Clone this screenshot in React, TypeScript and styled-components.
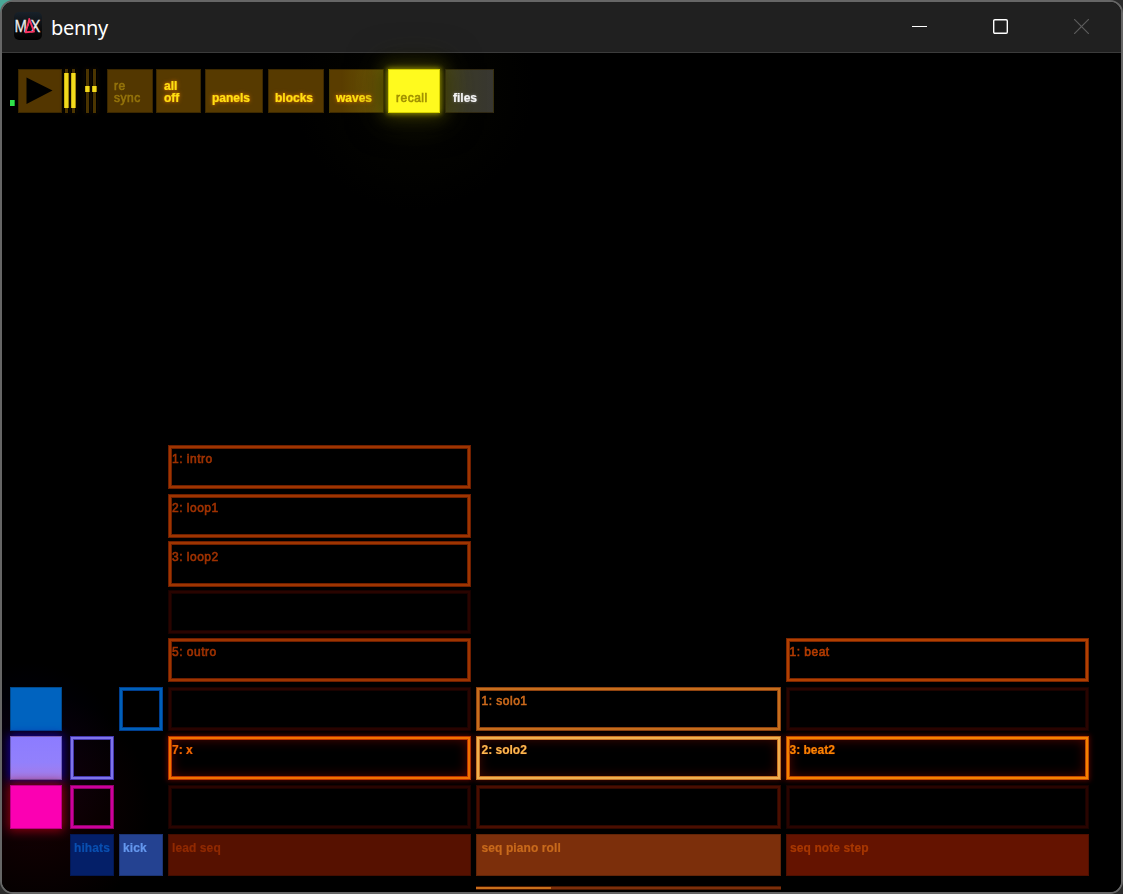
import React from "react";
import styled, { createGlobalStyle, css } from "styled-components";

const GlobalStyle = createGlobalStyle`
  html, body { margin: 0; padding: 0; }
  body {
    background: linear-gradient(135deg, #4aa898 0, #4aa898 20px, #2b2b2b 40px);
    overflow: hidden;
    font-family: "Liberation Sans", Arial, sans-serif;
  }
  * { box-sizing: border-box; }
`;

const Window = styled.div`
  width: 1123px;
  height: 894px;
  display: flex;
  flex-direction: column;
  border: 2px solid #666;
  border-radius: 13px;
  background: #000;
  overflow: hidden;
`;

const TitleBar = styled.header`
  height: 51px;
  flex: none;
  display: flex;
  align-items: center;
  padding: 0 0 2px 12px;
  background: #202020;
  border-bottom: 1px solid #3b3b3b;
`;

const Title = styled.h1`
  margin: 0 auto 0 9px;
  padding-top: 4px;
  font: 400 20px/28px "Noto Sans", "Open Sans", sans-serif;
  letter-spacing: -0.3px;
  color: #fff;
`;

const WindowButton = styled.button<{ $dim?: boolean }>`
  width: 81px;
  height: 48px;
  padding: 0 0 0 2px;
  border: 0;
  background: none;
  display: grid;
  place-items: center;
  color: ${(p) => (p.$dim ? "#5b5b5b" : "#fff")};
`;

const Stage = styled.main`
  flex: 1;
  display: flex;
  flex-direction: column;
  padding: 16px 0 0 8px;
  background:
    radial-gradient(circle at 412px 38px, rgba(44, 44, 0, 0.28), rgba(20, 20, 0, 0.14) 60px, transparent 120px),
    radial-gradient(circle at 34px 755px, rgba(100, 0, 10, 0.22), transparent 115px),
    radial-gradient(circle at 24px 704px, rgba(0, 0, 80, 0.24), transparent 95px),
    #000;
`;

const Toolbar = styled.nav`
  display: flex;
  height: 44px;
  flex: none;
`;

const Led = styled.i`
  width: 5px;
  height: 6px;
  margin: 31px 3px 0 0;
  background: #2fe04a;
  border: 1px solid #17a02c;
  border-width: 0 1px 0 0;
`;

const PlayButton = styled.button`
  width: 44px;
  height: 44px;
  padding: 0;
  border: 1px solid #3c2800;
  background: #533600;
  display: grid;
  place-items: center;
`;

const Meters = styled.div<{ $gap: number; $left: number }>`
  display: flex;
  gap: ${(p) => p.$gap}px;
  margin-left: ${(p) => p.$left}px;
  align-items: center;
`;

const Meter = styled.i<{ $level?: boolean }>`
  width: 5px;
  height: 44px;
  padding: ${(p) => (p.$level ? "4px 0 5px" : "17px 0 21px")};
  background: linear-gradient(90deg, transparent 1px, #4c3500 1px, #4c3500 4px, transparent 4px);
  box-shadow: 0 0 5px rgba(90, 50, 0, 0.25);

  &::before {
    content: "";
    display: block;
    height: 100%;
    background: linear-gradient(90deg, #a58a0a, #f3dc1c 1px, #f3dc1c 4px, #a58a0a 4px);
  }
`;

type Tone = "dim" | "lit" | "near" | "on" | "plain";

const tones = {
  dim: css`
    background: #533700;
    color: #94730a;
  `,
  lit: css`
    background: #573a00;
    color: #ffe012;
    text-shadow: 0 0 4px #d87400, 0 0 2px #b86000;
  `,
  near: css`
    background: linear-gradient(90deg, #5a3d00 20%, #685205 80%, #746606);
    color: #ffe612;
    text-shadow: 0 0 4px #d87400, 0 0 2px #b86000;
  `,
  on: css`
    background: #fffa1e;
    color: #a09000;
    border-color: #d6d000;
    box-shadow: 0 0 5px 1px #8c8800, 0 0 16px 3px #3a3800, 0 0 34px 6px rgba(34, 34, 0, 0.55);
    position: relative;
  `,
  plain: css`
    background: linear-gradient(90deg, #4a4920, #3b3a2a 45%, #383731);
    color: #f4f4f4;
    text-shadow: 0 0 3px #888;
  `,
};

const ToolButton = styled.button<{ $tone: Tone; $width: number; $left: number; $indent?: number }>`
  width: ${(p) => p.$width}px;
  height: 44px;
  margin-left: ${(p) => p.$left}px;
  padding: 0 0 8px ${(p) => p.$indent ?? 6}px;
  border: 1px solid rgba(40, 28, 0, 0.55);
  display: flex;
  align-items: flex-end;
  text-align: left;
  white-space: pre;
  font: 700 12px/12px "Liberation Sans", Arial, sans-serif;
  ${(p) => tones[p.$tone]}
`;

const Label = styled.span<{ $thin?: boolean }>`
  display: block;
  white-space: pre;
  filter: blur(0.6px);
  -webkit-text-stroke: 0.2px currentColor;
  ${(p) =>
    p.$thin &&
    css`
      font-weight: 400;
      letter-spacing: 0.5px;
      -webkit-text-stroke: 0.6px currentColor;
    `}
`;

const Board = styled.section`
  display: grid;
  grid-template-columns: 60px 49px 49px 308px 310px 303px;
  grid-template-rows: 49px 47px 49px 48px 49px 49px 49px 49px 52px 4px;
  margin-top: 332px;
  align-items: start;
  justify-items: start;
`;

const area = css<{ $col: number; $row: number }>`
  grid-column: ${(p) => p.$col};
  grid-row: ${(p) => p.$row};
`;

const Swatch = styled.div<{ $col: number; $row: number; $fill: string; $glow?: string }>`
  ${area}
  width: 52px;
  height: 44px;
  background: ${(p) => p.$fill};
  border: 1px solid rgba(0, 0, 0, 0.25);
  box-shadow: ${(p) => p.$glow ?? "none"};
`;

type SlotProps = {
  $col: number;
  $row: number;
  $w: number;
  $h?: number;
  $line: string;
  $edge: string;
  $ink?: string;
  $pad?: number;
  $glow?: string;
};

const Slot = styled.div<SlotProps>`
  ${area}
  width: ${(p) => p.$w}px;
  height: ${(p) => p.$h ?? 44}px;
  padding: ${(p) => (p.$h ? 8 : 6)}px 0 0 ${(p) => p.$pad ?? 3}px;
  border: 1px solid ${(p) => p.$edge};
  box-shadow: inset 0 0 0 2px ${(p) => p.$line}, inset 0 0 0 3px ${(p) => p.$edge}
    ${(p) => (p.$glow ? `, 0 0 5px 1px ${p.$glow}, inset 0 0 12px 3px ${p.$glow}` : "")};
  color: ${(p) => p.$ink ?? "transparent"};
  font: 700 12px/14px "Liberation Sans", Arial, sans-serif;
  text-shadow: 0 0 2px ${(p) => p.$glow ?? "transparent"};
`;

const TrackHeader = styled.div<{ $col: number; $row: number; $w: number; $fill: string; $ink: string; $pad?: number }>`
  ${area}
  width: ${(p) => p.$w}px;
  height: 42px;
  padding: 6px 0 0 ${(p) => p.$pad ?? 3}px;
  border: 1px solid rgba(0, 0, 0, 0.2);
  background: ${(p) => p.$fill};
  color: ${(p) => p.$ink};
  font: 700 12px/14px "Liberation Sans", Arial, sans-serif;
  letter-spacing: 0.1px;
`;

const Progress = styled.div<{ $col: number; $row: number }>`
  ${area}
  width: 305px;
  height: 4px;
  border: solid #4a1800;
  border-width: 1px 0;
  background: #7c2f0b;
`;

const ProgressFill = styled.div`
  height: 2px;
  background: #c8701c;
`;

const DIM = { $line: "#290400", $edge: "#190200" };
const ORANGE = { $line: "#9e3500", $edge: "#701f00", $ink: "#a03200" };

const leadSlots = [
  { row: 1, label: "1: intro", ...ORANGE },
  { row: 2, label: "2: loop1", ...ORANGE },
  { row: 3, label: "3: loop2", h: 46, ...ORANGE },
  { row: 4, label: "", ...DIM },
  { row: 5, label: "5: outro", ...ORANGE },
  { row: 6, label: "", ...DIM },
  { row: 7, label: "7: x", $line: "#f07200", $edge: "#b83400", $ink: "#f06a00", $glow: "#4c0500" },
  { row: 8, label: "", ...DIM },
];

const pianoSlots = [
  { row: 6, label: "1: solo1", $line: "#c66e1d", $edge: "#904410", $ink: "#cc6a1c" },
  { row: 7, label: "2: solo2", $line: "#f0b050", $edge: "#c87424", $ink: "#ffb84e", $glow: "#3c0600" },
  { row: 8, label: "", $line: "#4a0e00", $edge: "#300800" },
];

const noteSlots = [
  { row: 5, label: "1: beat", $line: "#b24000", $edge: "#7c2600", $ink: "#b43c00" },
  { row: 6, label: "", ...DIM },
  { row: 7, label: "3: beat2", $line: "#f58200", $edge: "#c04800", $ink: "#fc8400", $glow: "#4c0500" },
  { row: 8, label: "", ...DIM },
];

const tracks = [
  { col: 4, width: 303, pad: 3, slots: leadSlots },
  { col: 5, width: 305, pad: 4.5, slots: pianoSlots },
  { col: 6, width: 303, pad: 2.5, slots: noteSlots },
];

const Logo = () => (
  <svg width="28" height="28" viewBox="0 0 28 28">
    <defs>
      <linearGradient id="tile" x1="0" y1="0" x2="0" y2="1">
        <stop offset="0" stopColor="#17212a" />
        <stop offset="0.6" stopColor="#0b0b0c" />
        <stop offset="1" stopColor="#000" />
      </linearGradient>
    </defs>
    <rect width="28" height="28" rx="5" fill="url(#tile)" />
    <g fill="#ededed" stroke="#ededed" strokeWidth="0.4" fontFamily="Open Sans, sans-serif" fontSize="17">
      <text x="0.6" y="20" textLength="12.5" lengthAdjust="spacingAndGlyphs">M</text>
      <text x="17" y="20" textLength="9" lengthAdjust="spacingAndGlyphs">X</text>
    </g>
    <path d="M15.5 7.5L11.5 20.3L20 19.6L15.3 7L13.8 14" fill="none" stroke="#f53460" strokeWidth="1.9" strokeLinejoin="round" />
  </svg>
);

export default function App() {
  return (
    <>
      <GlobalStyle />
      <Window>
        <TitleBar>
          <Logo />
          <Title>benny</Title>
          <WindowButton aria-label="Minimize">
            <svg width="15" height="15" viewBox="0 0 15 15"><path d="M0 7.5H15" stroke="currentColor" /></svg>
          </WindowButton>
          <WindowButton aria-label="Maximize">
            <svg width="15" height="15" viewBox="0 0 15 15">
              <rect x="0.7" y="0.7" width="13.6" height="13.6" rx="1.2" fill="none" stroke="currentColor" strokeWidth="1.4" />
            </svg>
          </WindowButton>
          <WindowButton aria-label="Close" $dim>
            <svg width="15" height="15" viewBox="0 0 15 15"><path d="M0 0L15 15M15 0L0 15" stroke="currentColor" strokeWidth="1.2" /></svg>
          </WindowButton>
        </TitleBar>
        <Stage>
          <Toolbar>
            <Led />
            <PlayButton aria-label="Play">
              <svg width="42" height="42" viewBox="0 0 42 42"><path d="M7.5 7.5L33.5 20.5L7.5 34Z" fill="#000" /></svg>
            </PlayButton>
            <Meters $gap={2} $left={2}>
              <Meter $level />
              <Meter $level />
            </Meters>
            <Meters $gap={2} $left={9}>
              <Meter />
              <Meter />
            </Meters>
            <ToolButton $tone="dim" $width={46} $left={10} $indent={6}><Label $thin>{"re\nsync"}</Label></ToolButton>
            <ToolButton $tone="lit" $width={45} $left={3} $indent={7}><Label>{"all\noff"}</Label></ToolButton>
            <ToolButton $tone="lit" $width={58} $left={4}><Label>panels</Label></ToolButton>
            <ToolButton $tone="lit" $width={56} $left={5}><Label>blocks</Label></ToolButton>
            <ToolButton $tone="near" $width={55} $left={5}><Label>waves</Label></ToolButton>
            <ToolButton $tone="on" $width={52} $left={4} $indent={7}><Label $thin>recall</Label></ToolButton>
            <ToolButton $tone="plain" $width={49} $left={5} $indent={7}><Label>files</Label></ToolButton>
          </Toolbar>
          <Board>
            <Swatch $col={1} $row={6} $fill="#0063bf" />
            <Swatch $col={1} $row={7} $fill="linear-gradient(#8c7cff, #9280fc 60%, #a67ce8)" $glow="0 0 9px 1px #1500a0" />
            <Swatch $col={1} $row={8} $fill="#fb00b2" $glow="0 0 10px 2px #8c0010" />
            <Slot $col={3} $row={6} $w={44} $line="#0060b8" $edge="#003f90" />
            <Slot $col={2} $row={7} $w={44} $line="#7f74ea" $edge="#4438b0" />
            <Slot $col={2} $row={8} $w={44} $line="#cc009c" $edge="#900068" />
            {tracks.map((track) =>
              track.slots.map(({ row, label, h, ...look }: any) => (
                <Slot key={`${track.col}-${row}`} $col={track.col} $row={row} $w={track.width} $h={h} $pad={track.pad} {...look}>
                  {label && <Label $thin={!look.$glow}>{label}</Label>}
                </Slot>
              ))
            )}
            <TrackHeader $col={2} $row={9} $w={44} $fill="#041f68" $ink="#0a4fb0"><Label>hihats</Label></TrackHeader>
            <TrackHeader $col={3} $row={9} $w={44} $fill="#244291" $ink="#6598ee"><Label>kick</Label></TrackHeader>
            <TrackHeader $col={4} $row={9} $w={303} $fill="#561100" $ink="#902a00"><Label>lead seq</Label></TrackHeader>
            <TrackHeader $col={5} $row={9} $w={305} $pad={4.5} $fill="#7c2f0b" $ink="#c86a1c"><Label>seq piano roll</Label></TrackHeader>
            <TrackHeader $col={6} $row={9} $w={303} $fill="#641300" $ink="#a83800"><Label>seq note step</Label></TrackHeader>
            <Progress $col={5} $row={10}>
              <ProgressFill style={{ width: "24.6%" }} />
            </Progress>
          </Board>
        </Stage>
      </Window>
    </>
  );
}
